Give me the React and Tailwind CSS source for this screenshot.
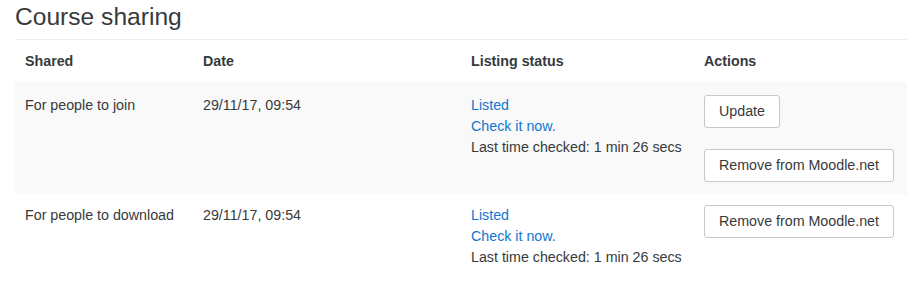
export default function App() {
  const font = { fontFamily: '"Liberation Sans", Arial, sans-serif' };
  const Btn = ({ children }) => (
    <button className="border border-[#c8c8c8] rounded-[3px] bg-white px-[14px] h-[33px] text-[14.25px] leading-[21px] text-[#373a3c] whitespace-nowrap">
      {children}
    </button>
  );
  const Status = () => (
    <div className="flex flex-col leading-[21px]">
      <a className="text-[#1177d1]">Listed</a>
      <a className="text-[#1177d1]">Check it now.</a>
      <span>Last time checked: 1 min 26 secs</span>
    </div>
  );
  return (
    <div className="bg-white w-[922px] h-[281px] overflow-hidden text-[#373a3c]" style={font}>
      <h2 className="text-[24.6px] leading-[29px] pl-[15px] pt-[2px] mb-[8px] font-normal text-[#373a3c]">Course sharing</h2>
      <div className="mx-[15px] text-[14.25px]">
        <div className="grid grid-cols-[178px_268px_233px_213px] border-t border-[#eceeef] h-[43px] items-center font-bold leading-[20px]">
          <div className="px-[10px]">Shared</div>
          <div className="px-[10px]">Date</div>
          <div className="px-[10px]">Listing status</div>
          <div className="px-[10px]">Actions</div>
        </div>
        <div className="grid grid-cols-[178px_268px_233px_213px] bg-[#f9f9f9] pt-[13px] pb-[12px] leading-[21px]">
          <div className="px-[10px]">For people to join</div>
          <div className="px-[10px]">29/11/17, 09:54</div>
          <div className="px-[10px]"><Status /></div>
          <div className="px-[10px] flex flex-col items-start gap-[21px]">
            <Btn>Update</Btn>
            <Btn>Remove from Moodle.net</Btn>
          </div>
        </div>
        <div className="grid grid-cols-[178px_268px_233px_213px] pt-[11px] pb-[12px] leading-[21px]">
          <div className="px-[10px]">For people to download</div>
          <div className="px-[10px]">29/11/17, 09:54</div>
          <div className="px-[10px]"><Status /></div>
          <div className="px-[10px] flex flex-col items-start">
            <Btn>Remove from Moodle.net</Btn>
          </div>
        </div>
      </div>
    </div>
  );
}
